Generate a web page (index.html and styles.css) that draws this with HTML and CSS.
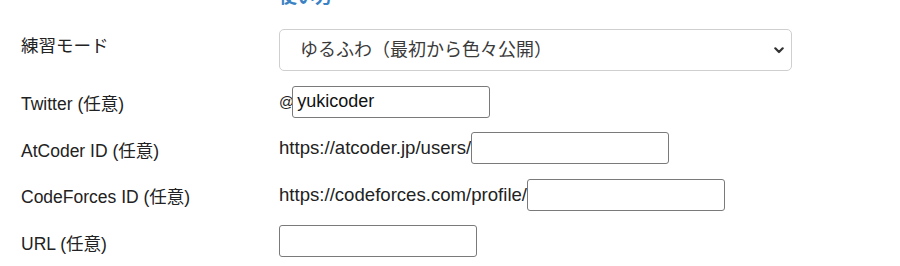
FILE: index.html
```html
<!DOCTYPE html>
<html lang="ja">
<head>
<meta charset="utf-8">
<link rel="stylesheet" href="styles.css">
</head>
<body>
<div class="page">
  <div class="form">
    <div class="label"></div>
    <div class="value"><h3 class="howto">使い方</h3></div>

    <div class="label label-top">練習モード</div>
    <div class="value">
      <div class="select-wrap">
        <select class="select">
          <option>ゆるふわ（最初から色々公開）</option>
        </select>
        <svg class="chev" width="10" height="7" viewBox="0 0 10 7"><path d="M1.3 1.3 L5 5 L8.7 1.3" fill="none" stroke="#333" stroke-width="2.2" stroke-linecap="round" stroke-linejoin="round"/></svg>
      </div>
    </div>

    <div class="label">Twitter (任意)</div>
    <div class="value"><span class="prefix at">@</span><input class="input" type="text" value="yukicoder"></div>

    <div class="label">AtCoder ID (任意)</div>
    <div class="value"><span class="prefix">https://atcoder.jp/users/</span><input class="input" type="text"></div>

    <div class="label">CodeForces ID (任意)</div>
    <div class="value"><span class="prefix">https://codeforces.com/profile/</span><input class="input" type="text"></div>

    <div class="label">URL (任意)</div>
    <div class="value"><input class="input" type="text"></div>
  </div>
</div>
</body>
</html>
```

FILE: styles.css
```css
html, body {
  margin: 0;
  padding: 0;
  background: #fff;
}
body {
  font-family: "Liberation Sans", "Noto Sans CJK JP", sans-serif;
  font-size: 17.5px;
  color: #222;
  overflow: hidden;
}
.page {
  padding-left: 21px;
  margin-top: -13px;
}
.form {
  display: grid;
  grid-template-columns: 258px 1fr;
  row-gap: 14.5px;
  align-items: center;
}
.form > .label:first-child + .value {
  margin-bottom: 7.5px;
}
.label {
  line-height: 20px;
  padding-top: 5px;
}
.label-top {
  align-self: start;
  padding-top: 7px;
}
.howto {
  margin: 0;
  font-size: 18px;
  line-height: 20px;
  font-weight: bold;
  color: #3b82c4;
}
.value {
  display: flex;
  align-items: center;
}
.prefix {
  white-space: nowrap;
  font-size: 18.6px;
}
.prefix.at {
  font-size: 15px;
  letter-spacing: -2px;
  padding-right: 0;
  padding-bottom: 1px;
}
.select-wrap {
  position: relative;
  width: 513px;
}
.select {
  -webkit-appearance: none;
  appearance: none;
  display: block;
  width: 100%;
  height: 42px;
  box-sizing: border-box;
  border: 1px solid #cfcfcf;
  border-radius: 5px;
  background: #fff;
  padding: 0 0 0 20px;
  font-family: "Liberation Sans", "Noto Sans CJK JP", sans-serif;
  font-size: 18px;
  color: #3a3a3a;
}
.chev {
  position: absolute;
  right: 8px;
  top: 18px;
}
.input {
  width: 198px;
  height: 32px;
  box-sizing: border-box;
  border: 1px solid #7a7a7a;
  border-radius: 3px;
  padding: 0 4px;
  margin: 0;
  font-family: "Liberation Sans", "Noto Sans CJK JP", sans-serif;
  font-size: 18px;
  color: #111;
  background: #fff;
}
```
